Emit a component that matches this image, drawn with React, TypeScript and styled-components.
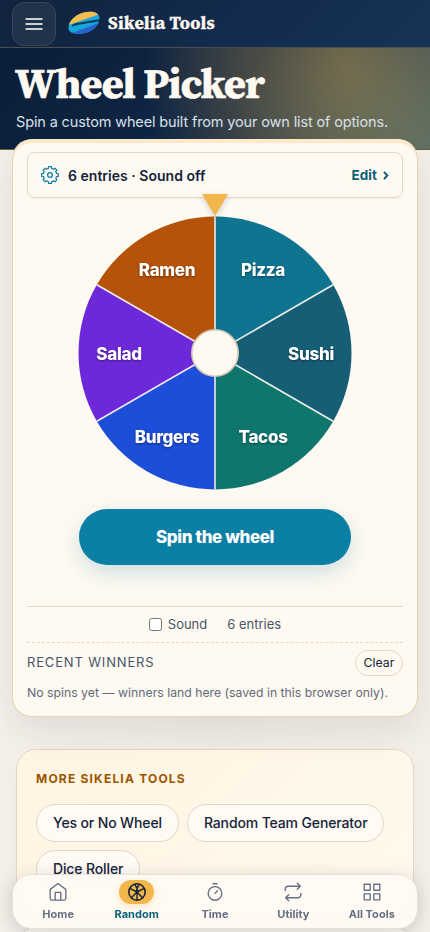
import React from 'react';
import styled, { createGlobalStyle } from 'styled-components';

const Global = createGlobalStyle`
  * { box-sizing: border-box; }
  html, body, #root { height: 100%; }
  body { margin: 0; overflow: hidden; background: #f4efe8; color: #14233a; font-family: Inter, sans-serif; }
  button { font-family: inherit; color: inherit; }
`;

const Page = styled.div`
  height: 932px;
  overflow: hidden;
  background: linear-gradient(90deg, #f5f0ea, #f1ece4 50%, #f4efe7);
`;

const Header = styled.header`
  height: 48px;
  padding: 0 12px;
  display: flex;
  align-items: center;
  background: linear-gradient(135deg, #11233d, #12294a 45%, #163355);
  border-bottom: 1px solid #494e4e;
`;

const MenuButton = styled.button`
  width: 44px;
  height: 44px;
  margin-top: 1px;
  padding: 0;
  display: grid;
  place-items: center;
  border: 1px solid #35465e;
  border-radius: 12px;
  background: #21324b;
`;

const Brand = styled.div`
  margin-left: 12px;
  margin-top: -1px;
  display: flex;
  align-items: center;
  gap: 8px;
  color: #fffaf1;
  font: 700 18px/24px 'Source Serif 4', 'Liberation Serif', serif;
  letter-spacing: 0.22px;
  -webkit-text-stroke: 0.3px #fffaf1;
`;

const Hero = styled.section`
  height: 102px;
  padding: 10px 16px 0;
  border-bottom: 1px solid #6d5b3c;
  background:
    radial-gradient(ellipse 200px 240px at 345px 20px, rgba(242, 181, 68, 0.4), rgba(242, 181, 68, 0.24) 50%, transparent),
    radial-gradient(ellipse 200px 210px at 430px 120px, rgba(110, 155, 140, 0.42), transparent),
    linear-gradient(135deg, #0b1e37, #10294b 70%, #153656);
`;

const Title = styled.h1`
  margin: 0 0 0 -1px;
  color: #fffaf1;
  font: 700 42px/50px 'Source Serif 4', 'Liberation Serif', serif;
  letter-spacing: -0.75px;
  -webkit-text-stroke: 0.7px #fffaf1;
`;

const Lead = styled.p`
  margin: 3px 0 0;
  color: #d7e0ea;
  font-size: 14.5px;
  letter-spacing: -0.14px;
  line-height: 21px;
  white-space: nowrap;
`;

const ToolCard = styled.main`
  position: relative;
  height: 578px;
  margin: -11px 12px 0;
  padding: 12px 14px 0;
  border: 1px solid #e6d5b2;
  border-top-color: #fde8c9;
  border-radius: 20px;
  background: #fffaf1;
  box-shadow: inset 0 3px 0 #fde8c9, 0 14px 34px rgba(20, 35, 58, 0.09);
`;

const Settings = styled.div`
  height: 46px;
  padding: 0 13px;
  display: flex;
  align-items: center;
  border: 1px solid #e0d8c8;
  border-radius: 8px;
  box-shadow: 0 1px 3px rgba(20, 35, 58, 0.06);
  font-size: 14px;
  font-weight: 600;
  letter-spacing: 0.02px;
`;

const Summary = styled.span`
  flex: 1;
  margin-left: 9px;
`;

const Edit = styled.span`
  display: flex;
  align-items: center;
  gap: 6px;
  color: #0b607b;
  font-size: 13.5px;
  font-weight: 700;
`;

const WheelArea = styled.div`
  display: flex;
  justify-content: center;
  margin-top: -4px;
  height: 300px;
  svg { display: block; overflow: visible; }
  text {
    fill: #fff;
    font: 800 17px Inter, sans-serif;
    letter-spacing: -0.3px;
    text-anchor: middle;
    filter: drop-shadow(0 1px 1px rgba(0, 0, 0, 0.4));
  }
`;

const SpinButton = styled.button`
  display: block;
  width: 272px;
  height: 56px;
  margin: 15px auto 0;
  border: 0;
  border-radius: 28px;
  background: #0c7fa5;
  color: #fff;
  font-size: 17px;
  font-weight: 800;
  letter-spacing: -0.38px;
  box-shadow: 0 8px 22px rgba(12, 127, 165, 0.2);
`;

const Options = styled.div`
  height: 37px;
  margin-top: 41px;
  padding-bottom: 1px;
  border-top: 1px solid #e3d9c7;
  border-bottom: 1px dashed #e3d9c7;
  display: flex;
  align-items: center;
  justify-content: center;
  gap: 20px;
  color: #475569;
  font-size: 13px;
  line-height: 18px;
`;

const SoundLabel = styled.label`
  display: flex;
  align-items: center;
  gap: 6px;
`;

const Checkbox = styled.input`
  width: 13px;
  height: 13px;
  margin: 0;
`;

const WinnersHead = styled.div`
  display: flex;
  align-items: center;
  justify-content: space-between;
  height: 26px;
  margin-top: 7px;
`;

const WinnersTitle = styled.h2`
  margin: -2px 0 0;
  color: #475569;
  font-size: 13px;
  font-weight: 400;
  letter-spacing: 0.84px;
`;

const Clear = styled.button`
  height: 26px;
  width: 48px;
  padding: 0 0 1px;
  border: 1px solid #e0d8c8;
  border-radius: 13px;
  background: #fffaf1;
  font-size: 12.3px;
`;

const Empty = styled.p`
  margin: 8px 0 0;
  color: #5f6b7c;
  font-size: 12.25px;
  line-height: 18px;
  white-space: nowrap;
`;

const MoreCard = styled.section`
  height: 166px;
  margin: 32px 16px 0;
  padding: 19px;
  border: 1px solid #e2d8c9;
  border-radius: 20px;
  background: linear-gradient(135deg, #fff4e1, #fff9ed);
  box-shadow: 0 8px 24px rgba(20, 35, 58, 0.04);
`;

const MoreTitle = styled.h2`
  margin: 0;
  color: #9b5600;
  font-size: 12px;
  line-height: 20px;
  font-weight: 700;
  letter-spacing: 1.2px;
`;

const Chips = styled.div`
  margin-top: 15px;
  display: flex;
  flex-wrap: wrap;
  gap: 8px;
`;

const Chip = styled.a`
  height: 38px;
  padding: 0 16px 1px;
  display: flex;
  align-items: center;
  border: 1px solid #e2d8c9;
  border-radius: 19px;
  background: #fffaf3;
  font-size: 14px;
  font-weight: 500;
  letter-spacing: -0.13px;
`;

const NextCard = styled.section`
  height: 60px;
  margin: 12px 16px 0;
  border: 1px solid #dcd3c2;
  border-radius: 20px;
  background: #fffaf1;
`;

const Nav = styled.nav`
  position: fixed;
  left: 12px;
  bottom: 3px;
  width: 406px;
  height: 55px;
  padding: 4px 6px 0;
  display: grid;
  grid-template-columns: repeat(5, 1fr);
  border: 1px solid #e6e0d6;
  border-radius: 20px;
  background: rgba(255, 250, 243, 0.96);
  box-shadow: 0 4px 18px rgba(20, 35, 58, 0.18);
`;

const NavItem = styled.a<{ $active?: boolean }>`
  display: flex;
  flex-direction: column;
  align-items: center;
  gap: 3px;
  padding-top: 1px;
  color: ${p => (p.$active ? '#0b607b' : '#667084')};
  font-size: 11px;
  line-height: 14px;
  font-weight: 700;
  letter-spacing: 0.03px;
`;

const NavIcon = styled.span<{ $active?: boolean }>`
  width: 35px;
  height: 24px;
  display: grid;
  place-items: center;
  border-radius: 12px;
  color: ${p => (p.$active ? '#14233a' : 'inherit')};
  background: ${p => (p.$active ? '#f2b64b' : 'transparent')};
  box-shadow: ${p => (p.$active ? '0 2px 6px rgba(242, 182, 75, 0.35)' : 'none')};
  svg { display: block; }
`;

const Logo = () => (
  <svg width="32" height="24" viewBox="0 0 32 24">
    <defs>
      <clipPath id="shell">
        <path d="M0.4 16.5C1 10 7 4 15 1.8C23 -0.4 31 1 31.4 6.5C31.8 13 26 19.5 18 21.7C9 24 0 22.5 .4 16.5Z" />
      </clipPath>
    </defs>
    <g clipPath="url(#shell)">
      <rect width="32" height="24" fill="#14a8dc" />
      <path d="M-1 14.5L32 3V-2H-1Z" fill="#f6bd4d" />
      <path d="M0 23.5L33 11V25H0Z" fill="#2862cc" />
      <path d="M4 14.2Q5 12.6 12 11.5L31 8.3V10.4L12 13.4Q7 14.5 4 15.5Z" fill="#083958" />
    </g>
  </svg>
);

const gearPath = (() => {
  const pts: string[] = [];
  for (let i = 0; i < 8; i++) {
    const mid = (i * Math.PI) / 4;
    [[-0.26, 6.7], [-0.17, 8.4], [0.17, 8.4], [0.26, 6.7]].forEach(([d, r]) => {
      pts.push(`${(9 + r * Math.sin(mid + d)).toFixed(2)} ${(9 - r * Math.cos(mid + d)).toFixed(2)}`);
    });
  }
  return `M${pts.join('L')}Z`;
})();

const Gear = () => (
  <svg width="18" height="18" viewBox="0 0 18 18" fill="none" stroke="#0c7fa5" strokeWidth="1.25" strokeLinejoin="round">
    <path d={gearPath} />
    <circle cx="9" cy="9" r="2.4" />
  </svg>
);

const slices = [
  { label: 'Pizza', color: '#0e7490', x: 185, y: 82 },
  { label: 'Sushi', color: '#155e75', x: 233, y: 166 },
  { label: 'Tacos', color: '#0f766e', x: 185, y: 249 },
  { label: 'Burgers', color: '#1d4ed8', x: 89, y: 249 },
  { label: 'Salad', color: '#6d28d9', x: 41, y: 166 },
  { label: 'Ramen', color: '#b45309', x: 89, y: 82 },
];

const rim = (i: number) => {
  const a = (i * Math.PI) / 3;
  return `${137 + 136.5 * Math.sin(a)} ${159 - 136.5 * Math.cos(a)}`;
};

const Wheel = () => (
  <svg width="274" height="302" viewBox="0 0 274 302">
    {slices.map((s, i) => (
      <path key={s.label} d={`M137 159L${rim(i)}A136.5 136.5 0 0 1 ${rim(i + 1)}Z`} fill={s.color} />
    ))}
    {slices.map((s, i) => (
      <path key={s.label} d={`M137 159L${rim(i)}`} stroke="#fffaf1" strokeOpacity="0.9" strokeWidth="1.6" />
    ))}
    {slices.map(s => (
      <text key={s.label} x={s.x} y={s.y}>{s.label}</text>
    ))}
    <circle cx="137" cy="159" r="23.2" fill="#fffaf1" stroke="#d3c6b5" strokeWidth="1.6" />
    <path d="M124 0H150L137 22Z" fill="#f2b64b" filter="drop-shadow(0 2px 3px rgba(20,35,58,.2))" />
  </svg>
);

const stroke = { fill: 'none', stroke: 'currentColor', strokeLinecap: 'round', strokeLinejoin: 'round' } as const;

const HomeIcon = () => (
  <svg width="20" height="20" viewBox="0 0 20 20" {...stroke} strokeWidth="1.35">
    <path d="M2.2 7.4L10 1.5l7.8 5.9v9.1a1.6 1.6 0 0 1-1.6 1.6H3.8a1.6 1.6 0 0 1-1.6-1.6ZM7.2 17.8V10.3h5.6v7.5" />
  </svg>
);
const WheelIcon = () => (
  <svg width="20" height="20" viewBox="0 0 20 20" {...stroke} strokeWidth="1.6">
    <circle cx="10" cy="10" r="8.2" />
    <path d="M10 10V18M10 10L2.8 6.4M10 10L17.2 6.4M10 10L4.4 15.8M10 10L15.6 15.8" strokeWidth="1.4" />
    <path d="M7.9 2.4L10 6.4l2.1-4M10 6.4V10" strokeWidth="1.5" />
    <circle cx="10" cy="9.2" r="1.8" fill="currentColor" stroke="none" />
  </svg>
);
const TimeIcon = () => (
  <svg width="20" height="20" viewBox="0 0 20 20" {...stroke} strokeWidth="1.4">
    <circle cx="10" cy="11.4" r="6.8" />
    <path d="M8 1.8h4M10 11.4l2.4-2.6" />
  </svg>
);
const UtilityIcon = () => (
  <svg width="20" height="20" viewBox="0 0 20 20" {...stroke} strokeWidth="1.4">
    <path d="M14.3 1.2l3 3-3 3M17.3 4.2H5.2a3 3 0 0 0-3 3v1.3M5.7 18.8l-3-3 3-3M2.7 15.8h12.1a3 3 0 0 0 3-3v-1.3" />
  </svg>
);
const GridIcon = () => (
  <svg width="20" height="20" viewBox="0 0 20 20" {...stroke} strokeWidth="1.35">
    <path d="M2.2 2.2h6v6h-6zM11.8 2.2h6v6h-6zM2.2 11.8h6v6h-6zM11.8 11.8h6v6h-6z" />
  </svg>
);

const navItems = [
  { label: 'Home', Icon: HomeIcon },
  { label: 'Random', Icon: WheelIcon, active: true },
  { label: 'Time', Icon: TimeIcon },
  { label: 'Utility', Icon: UtilityIcon },
  { label: 'All Tools', Icon: GridIcon },
];

export default function App() {
  return (
    <Page>
      <Global />
      <Header>
        <MenuButton aria-label="Menu">
          <svg width="18" height="14" stroke="#cbd0d4" strokeWidth="2"><path d="M0.5 2H17.5M0.5 7H17.5M0.5 12H17.5" /></svg>
        </MenuButton>
        <Brand><Logo />Sikelia Tools</Brand>
      </Header>
      <Hero>
        <Title>Wheel Picker</Title>
        <Lead>Spin a custom wheel built from your own list of options.</Lead>
      </Hero>
      <ToolCard>
        <Settings>
          <Gear />
          <Summary>6 entries · Sound off</Summary>
          <Edit>
            Edit
            <svg width="6" height="10" fill="none" stroke="currentColor" strokeWidth="2"><path d="M1 1.8L4.3 5.5L1 9.2" /></svg>
          </Edit>
        </Settings>
        <WheelArea><Wheel /></WheelArea>
        <SpinButton>Spin the wheel</SpinButton>
        <Options>
          <SoundLabel><Checkbox type="checkbox" />Sound</SoundLabel>
          <span>6 entries</span>
        </Options>
        <WinnersHead>
          <WinnersTitle>RECENT WINNERS</WinnersTitle>
          <Clear>Clear</Clear>
        </WinnersHead>
        <Empty>No spins yet — winners land here (saved in this browser only).</Empty>
      </ToolCard>
      <MoreCard>
        <MoreTitle>MORE SIKELIA TOOLS</MoreTitle>
        <Chips>
          <Chip>Yes or No Wheel</Chip>
          <Chip>Random Team Generator</Chip>
          <Chip>Dice Roller</Chip>
        </Chips>
      </MoreCard>
      <NextCard />
      <Nav>
        {navItems.map(({ label, Icon, active }) => (
          <NavItem key={label} $active={active}>
            <NavIcon $active={active}><Icon /></NavIcon>
            {label}
          </NavItem>
        ))}
      </Nav>
    </Page>
  );
}
